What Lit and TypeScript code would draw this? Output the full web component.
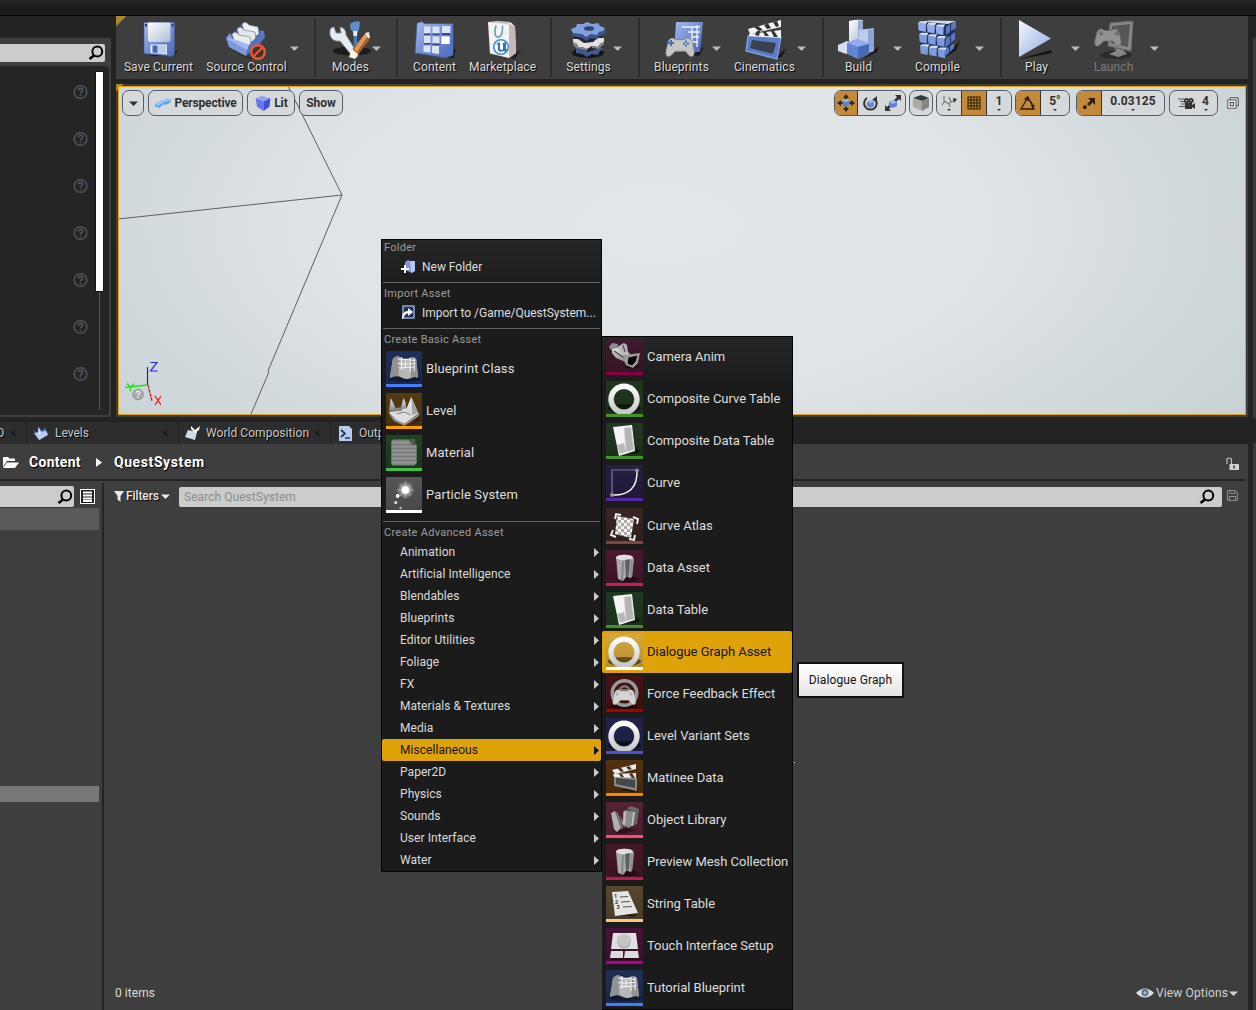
import { LitElement, html, svg, css, nothing } from "lit";
import { customElement, state } from "lit/decorators.js";

type Tool = { id: string; label: string; gap: number; width: number; arrowGap?: number; off?: boolean };
type Asset = { label: string; icon: string; bg: string; bar: string };

const toolGroups: Tool[][] = [
  [
    { id: "save", label: "Save Current", gap: 0, width: 84 },
    { id: "source", label: "Source Control", gap: 6, width: 80, arrowGap: 3 },
  ],
  [{ id: "modes", label: "Modes", gap: 12, width: 44, arrowGap: -1 }],
  [
    { id: "content", label: "Content", gap: 10, width: 52 },
    { id: "market", label: "Marketplace", gap: 8, width: 68 },
  ],
  [{ id: "settings", label: "Settings", gap: 12, width: 48, arrowGap: 0 }],
  [
    { id: "blueprints", label: "Blueprints", gap: 12, width: 58, arrowGap: 1 },
    { id: "cinematics", label: "Cinematics", gap: 11, width: 64, arrowGap: 0 },
  ],
  [
    { id: "build", label: "Build", gap: 18, width: 32, arrowGap: 18 },
    { id: "compile", label: "Compile", gap: 12, width: 46, arrowGap: 14 },
  ],
  [
    { id: "play", label: "Play", gap: 20, width: 28, arrowGap: 20 },
    { id: "launch", label: "Launch", gap: 12, width: 42, arrowGap: 15, off: true },
  ],
];
const groupTail = [15, 15, 14, 16, 16, 16, 0];

const basicAssets: Asset[] = [
  { label: "Blueprint Class", icon: "map", bg: "#1f2f55", bar: "#3f7fff" },
  { label: "Level", icon: "level", bg: "#543a14", bar: "#ff9c00" },
  { label: "Material", icon: "material", bg: "#1f4222", bar: "#40c040" },
  { label: "Particle System", icon: "particle", bg: "#565656", bar: "#ffffff" },
];

const advanced = [
  "Animation", "Artificial Intelligence", "Blendables", "Blueprints", "Editor Utilities",
  "Foliage", "FX", "Materials & Textures", "Media", "Miscellaneous", "Paper2D",
  "Physics", "Sounds", "User Interface", "Water",
];

const miscAssets: Asset[] = [
  { label: "Camera Anim", icon: "camera", bg: "#40192d", bar: "#8a0045" },
  { label: "Composite Curve Table", icon: "ring", bg: "#20381f", bar: "#45922a" },
  { label: "Composite Data Table", icon: "table", bg: "#20381f", bar: "#45922a" },
  { label: "Curve", icon: "curve", bg: "#271e43", bar: "#5528a8" },
  { label: "Curve Atlas", icon: "atlas", bg: "#382524", bar: "#7f4442" },
  { label: "Data Asset", icon: "column", bg: "#48192f", bar: "#c81e5a" },
  { label: "Data Table", icon: "table", bg: "#20381f", bar: "#45922a" },
  { label: "Dialogue Graph Asset", icon: "ring", bg: "#d8a93c", bar: "#ffffff" },
  { label: "Force Feedback Effect", icon: "wheel", bg: "#461314", bar: "#a80000" },
  { label: "Level Variant Sets", icon: "ring", bg: "#23234a", bar: "#4e51c8" },
  { label: "Matinee Data", icon: "clapper", bg: "#52310f", bar: "#ff8000" },
  { label: "Object Library", icon: "books", bg: "#542233", bar: "#ff4a73" },
  { label: "Preview Mesh Collection", icon: "column", bg: "#461829", bar: "#c41850" },
  { label: "String Table", icon: "list", bg: "#57462f", bar: "#ffc680" },
  { label: "Touch Interface Setup", icon: "touch", bg: "#451337", bar: "#b2008e" },
  { label: "Tutorial Blueprint", icon: "map", bg: "#1f2f55", bar: "#3f7fff" },
];

const defs = html`<svg class="defs" width="0" height="0">
  <defs>
    <linearGradient id="blue" x1="0" y1="0" x2="1" y2="1"><stop offset="0" stop-color="#a3b8ee" /><stop offset="1" stop-color="#4a67b8" /></linearGradient>
    <linearGradient id="pale" x1="0" y1="0" x2="1" y2="1"><stop offset="0" stop-color="#ffffff" /><stop offset="1" stop-color="#aebbd9" /></linearGradient>
    <linearGradient id="play" x1="0" y1="0" x2="1" y2="1"><stop offset="0" stop-color="#f6f8ff" /><stop offset="1" stop-color="#8ea9df" /></linearGradient>
    <linearGradient id="gray" x1="0" y1="0" x2="0" y2="1"><stop offset="0" stop-color="#e6e6e6" /><stop offset="1" stop-color="#858585" /></linearGradient>
    <linearGradient id="white" x1="0" y1="0" x2="0" y2="1"><stop offset="0" stop-color="#ffffff" /><stop offset="1" stop-color="#c9c9cb" /></linearGradient>
    <radialGradient id="glow"><stop offset="0" stop-color="#fff" /><stop offset=".35" stop-color="#fff" stop-opacity=".6" /><stop offset="1" stop-color="#fff" stop-opacity="0" /></radialGradient>
    <linearGradient id="shade" x1="0" y1="0" x2="0" y2="1"><stop offset="0" stop-color="#000" stop-opacity="0" /><stop offset="1" stop-color="#000" stop-opacity=".18" /></linearGradient>
    <pattern id="check" width="6" height="6" patternUnits="userSpaceOnUse"><rect width="6" height="6" fill="#f4f4f4" /><rect width="3" height="3" fill="#aaa" /><rect x="3" y="3" width="3" height="3" fill="#aaa" /></pattern>
    <pattern id="dots" x="7" y="4" width="4" height="4" patternUnits="userSpaceOnUse"><rect width="4" height="4" fill="#8a8a8a" /><rect x="1" y="1.4" width="2.4" height="1.2" fill="#5d5d5d" /><rect x="1.6" y="2.6" width="1.8" height="1" fill="#bcbcbc" /></pattern>
  </defs>
</svg>`;

const pad = svg`<path d="M2 9Q3 1 8 2L10 3.4H18L20 2Q25 1 26 9Q28.500 17 25.500 19Q22.500 20 19 14H9.500Q5 20 2 19Q-.5 17 2 9Z"/>`;

/* Toolbar artwork on a 48 x 44 canvas. */
const toolArt: Record<string, unknown> = {
  save: svg`<path d="M14 38L40 34L44 32L40 38Z" fill="#181818"/><path d="M10 4.500H40.500V36.500L38 38.500L10 35.500Z" fill="url(#blue)" stroke="#3f5593" stroke-width=".6"/><path d="M14 4.500H36.500V22.500Q36 24 34 24H16Q14 24 14 22Z" fill="url(#pale)"/><path d="M16.500 26.500H33V36.500L16.500 35Z" fill="#e6ebf7"/><path d="M18.500 27.500H23.500V35L18.500 34.500Z" fill="#4667ae"/><path d="M24 27.500H32V35.500L24 35Z" fill="#c0cbe6"/><path d="M11 6H13V8.500H11ZM37.500 6H39.500V8.500H37.500Z" fill="#27396e"/>`,
  source: svg`<path d="M12 34L28 40L40 31V37L28 41Z" fill="#222"/><path d="M36 12L42 13L43 20L38 24Z" fill="#5d78c2"/><path d="M9 17L20 5L38 12L38 24L22 32Z" fill="#3f5596"/><path d="M20 6Q23 3 25 5L27 7L36 9L37 16L34 18L22 13Z" fill="#eef1f3" stroke="#76828e" stroke-width=".7"/><path d="M15 11Q18 8 20 10L22 12L33 14L34 21L30 24L17 18Z" fill="#e3e8ea" stroke="#76828e" stroke-width=".7"/><path d="M10 16Q13 13 15 15L17 17L28 19L29 26L26 29L12 23Z" fill="#e9edee" stroke="#76828e" stroke-width=".7"/><path d="M4 20L8 15L11 21L27 27L24 38L7 29Z" fill="#7d98dd"/><path d="M4 20L11 21L27 27L25 32Z" fill="#a5b9ef"/><path d="M27 27L38 15L42 20L38 26L24 38Z" fill="#5572bd"/><circle cx="36" cy="34" r="6.800" fill="#46302a" stroke="#df5c3a" stroke-width="2.400"/><path d="M31.500 38.500L40.500 29.500" stroke="#df5c3a" stroke-width="2.400"/>`,
  modes: svg`<ellipse cx="26" cy="33" rx="19" ry="4.500" fill="#1b1b1b"/><path d="M25 5Q31 2 34 4L33 12L31 14H27Q22 9 25 5Z" fill="#5b8fcd"/><path d="M27 13H31.500L31 18H27.500Z" fill="#e4edf6"/><path d="M27.500 18H31L32 35H28Z" fill="#4a7db4"/><path d="M4 12Q5 9 8 9L10 15L15 15L14 9Q20 10 20 17L32 36Q32 41 27 39L14 23Q6 24 4 17Z" fill="#e7ecf1" stroke="#7c8a99" stroke-width=".9"/><path d="M42 14L44 21L32 37L26 35L27 30L38 17Z" fill="#9d5f2d"/><path d="M41 15L42 18L31 34L28 31L38 17Z" fill="#dc9a60"/><path d="M26 31L32 36L29 41L23 39Z" fill="#fff4e2"/><path d="M39 15L43 14L44 20L42 20Z" fill="#e9e4df"/>`,
  content: svg`<path d="M34 40L46 30L44 40Z" fill="#1f1f1f"/><path d="M7 5L12 3.500L14 5.500H43V37L36 40L5 35Z" fill="url(#blue)" stroke="#3f5593" stroke-width=".7"/><path d="M37 7H43V37L37 39Z" fill="#5676c6" opacity=".7"/><path d="M14 8.500H20.500V15.500H14ZM22.500 8.500H29.500V15.500H22.500ZM32 8H40.500V15H32ZM14 18H20.500V25H14ZM22.500 18.500H29.500V25.500H22.500ZM31.500 18.500H39.500V26H31.500ZM13.500 27.500H20.500V34.500L13.500 34ZM22 28H29V36L22 35Z" fill="#dbe3f8"/><path d="M14 15.500H20.500V17H14ZM22.500 15.500H29.500V17H22.500ZM32 15H40V17H32ZM14 25H20.500V26.500H14ZM22.500 25.500H29.500V27H22.500Z" fill="#334a86"/><path d="M31.500 18.500H39.500V26H31.500Z" fill="#fff"/>`,
  market: svg`<path d="M30 40L44 31L37 41Z" fill="#252525"/><path d="M10 4L33 4.500L37 8.500L38 35L31 40L12 35.500Z" fill="#f5f3f2"/><path d="M31 6L37 8L38 35L31 40Z" fill="#c4b8b9"/><path d="M10 4L19 3L33 4L31 6.500Z" fill="#cfcaca"/><path d="M18 7.500Q15 20 21 19Q25 17 24.500 7.500" fill="none" stroke="#5a9ec4" stroke-width="1.600"/><circle cx="23" cy="29" r="7.300" fill="#fff" stroke="#3f8fca" stroke-width="1.600"/><path d="M18 26L22 24V31Q23.500 33 25 31V26L24 25.500L28 24V31L30 32Q27 34.500 25 33Q21 35 20 32V27Z" fill="#3175b5"/>`,
  settings: svg`<ellipse cx="24" cy="35" rx="16" ry="5" fill="#151515"/><path d="M12 29L18 31H28L36 28L39 31L36 33L34 37L28 36L23 39L18 36L12 35Z" fill="#41578f"/><path d="M10 17L38 17L39 29L24 34L11 29Z" fill="#222631"/><path d="M9 21L14 21L20 25L29 24L34 20L40 20V24L36 26L34 29L28 28L23 31L18 29L14 29L13 26L9 25Z" fill="#e1e1e1"/><path d="M9 24L13 26L14 29L18 29L23 31V33L17 31L12 30L9 27ZM28 28L34 29L36 26L40 24V26L35 31L28 30Z" fill="#858585"/><path d="M7 12L41 11V16L36 18L33 21L27 20L22 23L18 20L9 18Z" fill="#3d5389"/><path d="M7 11L12 9L13 6L19 6L23 4L28 6L34 5L36 8L41 10L39 13L35 14L33 17L27 16L22 19L18 16L9 15Z" fill="#829fdf"/><ellipse cx="25" cy="10.500" rx="5" ry="2.300" fill="#30446f"/>`,
  blueprints: svg`<path d="M34 37L47 29L42 38Z" fill="#1a1a1a"/><path d="M19 4H46L43 34H17Z" fill="url(#blue)"/><path d="M25 9H43M31 14H43M35 19H42M34 24H41M35 9V28M40 7V29" stroke="#eef3ff" stroke-width="1.300" fill="none"/><g transform="translate(8 18) scale(1.08)" fill="#c6c6c4" stroke="#777" stroke-width=".6">${pad}</g><path d="M14 22V28M11 25H17" stroke="#476fc0" stroke-width="2"/><path d="M29 22.500V24.500M29 26.500V28.500M26 25.500H28M30 25.500H32" stroke="#476fc0" stroke-width="2"/>`,
  cinematics: svg`<path d="M36 40L46 30L42 39Z" fill="#161616"/><path d="M8 18L41 19L37 41L6 33Z" fill="#5b7cc7" stroke="#8ba5e2" stroke-width="1.200"/><path d="M12 22L36 25L33 36L10 30Z" fill="#3a4050"/><path d="M8 11L41 2V9L10 16ZM9 16L41 12V20L9 18Z" fill="#f3f3f3"/><path d="M14 9L19 13L23 12L18 8ZM24 7L27 11L31 10L28 5.500ZM33 4L36 9L39 8L37 3ZM15 17L17 13H20L19 18ZM25 18L23 14H26L29 18ZM34 19L31 13H34L38 19Z" fill="#333"/>`,
  build: svg`<path d="M29 41L45 28L43 34Z" fill="#181818"/><path d="M15 3Q22 1 29 2V24H15Z" fill="url(#pale)"/><path d="M24 3L29 2V20H24Z" fill="#9babcf"/><path d="M25 12L40 10V33L28 37L25 30Z" fill="#becced"/><path d="M34 12L40 10V33L34 35Z" fill="#8ea4d6"/><path d="M4 27L13 23L20 26V33L12 36L4 33Z" fill="#d5def4"/><path d="M13 25L23 21L35 26V36L24 41L13 36Z" fill="#6484d2"/><path d="M13 25L23 21L35 26L24 29Z" fill="#91aaea"/><path d="M24 29L35 26V36L24 41Z" fill="#4968b5"/>`,
  compile: svg`<path d="M31 40L47 23L43 32Z" fill="#161616"/><path d="M6 4L42 5L40 30L28 38L8 29Z" fill="#223259"/>${[0, 1, 2].map((r) => [0, 1, 2].map((c) => svg`<path d="M${5 + c * 8.800 + r} ${5 + r * 11.500 + c * 1.600}l8 1l-.3 8l-7 -1.500Z" fill=${r === 0 ? "#94adea" : "#7e9bdd"}/><path d="M${5 + c * 8.800 + r} ${5 + r * 11.500 + c * 1.600}l2 -1.800h7.500l-1.500 2.800Z" fill="#d3ddf8"/>`))}<path d="M8 3.500L17 2.500L43 3L35 6Z" fill="#cddcf0"/><path d="M33 9L37 6V14L33 17ZM38 6L43 3V10L38 13ZM33 20L37 18V26L32 29ZM38 17L42 14V21L38 25ZM32 32L36 29V35L31 39ZM37 28L41 25V30L37 34Z" fill="#5b78c2"/>`,
  play: svg`<path d="M7 41L39 32L40 35L14 40Z" fill="#151515"/><path d="M7 2L39 20.500L7 39Z" fill="url(#play)"/>`,
  launch: svg`<ellipse cx="27" cy="37" rx="16" ry="4" fill="#2b2b2b"/><path d="M21 5L44 3L42 33L19 28Z" fill="#888" stroke="#6a6a6a"/><path d="M23 8L41 6L39 29L22 25Z" fill="#565656"/><path d="M26 30L34 32L38 36L29 39L20 36L27 33Z" fill="#868686"/><g transform="translate(5 9)" fill="#929292" stroke="#646464" stroke-width=".7">${pad}</g><path d="M12 13V18M9.500 15.500H14.500M28 13V18M25.500 15.500H30.500" stroke="#6a6a6a" stroke-width="1.500"/>`,
};

const tileArt: Record<string, unknown> = {
  map: svg`<ellipse cx="19" cy="27.500" rx="17" ry="3.500" fill="#0c1428" opacity=".65"/><path d="M7 8Q11 4 14 6Q19 9 24 7Q28 5 31 8L33 27Q30 25 26 27Q21 29 17 27Q10 23 4 27Z" fill="#b7b7b7"/><path d="M7 8Q11 4 14 6L13 25Q8 25 4 27ZM24 7Q28 5 31 8L33 27Q30 25 26 27Z" fill="#929292"/><path d="M12 8L30 9.500M12 12.500L20 13L30 12.500M13 17L30 16M16 6V19M20 8V18M25 7V21M29 7V20" stroke="#f3f3f3" fill="none" stroke-width="1.100"/>`,
  level: svg`<path d="M6 30L24 33L35 22V27L25 33Z" fill="#241804" opacity=".7"/><path d="M3 19L20 15L34 20L19 31L9 27Z" fill="#dedede"/><path d="M2 19L11 27L19 31L34 20V23L19 33L8 28Z" fill="#8c8c8c"/><path d="M3 18L5 5L9 13L10 17ZM15 15L18 5L20 9L21 16Z" fill="url(#gray)"/><path d="M20 18L26 4L33 20L27 22Z" fill="url(#white)"/><path d="M26 4L33 20L27 22Z" fill="#a5a5a5"/><path d="M4 19L9 15L18 14L16 18Z" fill="#858585"/><path d="M11 21L19 19L25 22" stroke="#777" fill="none"/>`,
  material: svg`<path d="M7 5H24L31 10V28Q30 30 28 30H7Q6 30 6 28V6Z" fill="url(#dots)" stroke="#898989"/><path d="M23 4H30V11L26 9Z" fill="#4d5b4d"/>`,
  particle: svg`<circle cx="20" cy="13" r="9" fill="url(#glow)"/><path d="M20 4V22M11 13H29M14 7L26 19M14 19L26 7" stroke="#fff" stroke-width=".6" opacity=".5"/><circle cx="20" cy="13" r="3.800" fill="#fff"/><circle cx="12" cy="19" r="1.900" fill="#fff"/><circle cx="10" cy="25.500" r="1.600" fill="#ddd"/><circle cx="15" cy="31" r="1.200" fill="#bbb"/>`,
  camera: svg`<path d="M18 28L30 25L34 28L26 30Z" fill="#16060e" opacity=".7"/><path d="M3 8L6 4L12 5L11 10L5 11Z" fill="#8c8c8c"/><path d="M6 10L17 8L24 15L22 24L10 19L6 14Z" fill="url(#gray)"/><path d="M11 8L18 4L21 6L22 13L16 14Z" fill="#b5b5b5"/><path d="M17 6L19 13M8 12L20 20" stroke="#4a4a4a" stroke-width="1.200"/><path d="M18 16L34 14L32 24L27 29L20 26L17 20Z" fill="#999"/><path d="M22 18L32 16L30 23L26 27L21 25Z" fill="#080808" stroke="#bdbdbd" stroke-width=".8"/>`,
  ring: svg`<ellipse cx="18.500" cy="27.500" rx="16.500" ry="4.500" fill="#000" opacity=".48"/><circle cx="18" cy="18.300" r="13" fill="none" stroke="url(#white)" stroke-width="5.400"/><circle cx="18" cy="18.300" r="10.300" fill="none" stroke="#8d8d8d" stroke-opacity=".4" stroke-width=".7"/>`,
  table: svg`<ellipse cx="25" cy="28" rx="9" ry="3" fill="#000" opacity=".5"/><path d="M7 4L26 2L29 28L13 33Z" fill="#f5f5f5"/><path d="M18 5L25 4L28 27L20 29Z" fill="#b4b4b4" stroke="#ddd" stroke-width=".7"/><path d="M11 22L18 20L20 29L14 31Z" fill="#b9b9b9"/>`,
  curve: svg`<path d="M6 30V5H31" fill="none" stroke="#807994" stroke-width="1.200"/><path d="M6 30Q32 31 31 5" fill="none" stroke="#f4f3f6" stroke-width="1.500"/><circle cx="31" cy="5.500" r="2" fill="#969494"/><circle cx="6" cy="30" r="2" fill="#969494"/>`,
  atlas: svg`<path d="M11 8L28 11L25 30L9 26Z" fill="url(#check)"/><path d="M9 11L10 6L15 7M27 9L32 11L31 16M7 22L5 27L10 29M23 31L28 32L29 27" fill="none" stroke="#f1f1f1" stroke-width="1.900"/>`,
  column: svg`<ellipse cx="21" cy="29" rx="11" ry="3" fill="#000" opacity=".4"/><path d="M10 7Q15 3 26 6L28 9L26 27L24 28L21 26L17 31L12 29Z" fill="#aaa"/><ellipse cx="18.500" cy="7.500" rx="8.500" ry="2.800" fill="#dedede"/><path d="M19 10L24 9L23 25L20 27Z" fill="#606060"/><path d="M25 9L27 9L26 27L24 27Z" fill="#8d8d8d"/><path d="M16 11H18L17 31L15 30Z" fill="#858585"/>`,
  wheel: svg`<ellipse cx="18" cy="30" rx="13" ry="3" fill="#000" opacity=".5"/><circle cx="18.500" cy="17" r="12.300" fill="none" stroke="#999" stroke-width="3.400"/><path d="M12 16Q13 9 18.500 9Q24 9 25 16" fill="#777"/><path d="M15 13Q18.500 10 22 13Z" fill="#2a1010"/><g transform="translate(6 12) scale(.88)" fill="#d4d4d4" stroke="#888" stroke-width=".5">${pad}</g><path d="M11 16V20M9 18H13M25 16V20M23 18H27" stroke="#aaa" stroke-width="1"/>`,
  clapper: svg`<path d="M12 30L32 27V31L26 32Z" fill="#1b1005" opacity=".65"/><path d="M8 16L31 18V31L8 26Z" fill="#888"/><path d="M10 18L29 20V28L10 24Z" fill="#484848"/><path d="M6 10L30 4V9L9 14ZM7 14L30 13V18L8 17Z" fill="#ededed"/><path d="M11 8L15 12L18 11L15 8ZM20 7L23 10L26 9L23 6ZM13 14L15 17H18L16 14ZM23 14L26 18H29L26 13Z" fill="#483720"/>`,
  books: svg`<path d="M8 30L20 26L31 28L16 32Z" fill="#1a070d" opacity=".6"/><path d="M5 11L9 9L15 26L11 30L8 27Z" fill="#b0b0b0"/><path d="M9 9L12 11L17 26L15 27Z" fill="#777"/><path d="M14 13L18 22L19 26L16 22Z" fill="#999"/><path d="M21 6L25 4L33 7L31 22L26 24L26 10Z" fill="#666"/><path d="M17 10L20 8L27 10L25 24L23 26L17 23Z" fill="#8c8c8c"/><path d="M18 10L20 9L19 23L17 22ZM27 10L29 10L27 24L25 24Z" fill="#c0c0c0"/>`,
  list: svg`<path d="M12 29L31 27L29 31Z" fill="#161006" opacity=".6"/><path d="M6 6L22 5L32 27L9 30Z" fill="#e5e5e5"/><path d="M14 11L22 10.500M15 16L24 15.500M17 21L26 20.500" stroke="#555" stroke-width="1.100"/><text x="8" y="12" font-size="5.500" font-weight="700" fill="#333">1</text><text x="9" y="17.500" font-size="5.500" font-weight="700" fill="#333">2</text><text x="10.500" y="23" font-size="5.500" font-weight="700" fill="#333">3</text>`,
  touch: svg`<path d="M6 30H33L35 32H4Z" fill="#15030f" opacity=".6"/><path d="M7 5H30L32 21H5Z" fill="#e0e0e0"/><circle cx="18" cy="13.500" r="7" fill="#777" opacity=".5"/><circle cx="18" cy="12.500" r="6.500" fill="#c5c5c5"/><path d="M5 23H17V30H4ZM19 23H32L33 30H18Z" fill="#dadada"/>`,
};

const search = html`<svg class="search" viewBox="0 0 16 16" width="16" height="16"><circle cx="9.300" cy="6.500" r="4.900" fill="none" stroke="#000" stroke-width="2" /><path d="M6 10.500L1.500 14" stroke="#000" stroke-width="2.600" /></svg>`;
const help = html`<svg width="15" height="16" viewBox="0 0 15 16"><circle cx="7.500" cy="8" r="6.300" fill="none" stroke="#4a5561" stroke-width="1.500" /><path d="M5.300 6.300Q5.500 4.300 7.500 4.300Q9.800 4.500 9.600 6.400Q9.400 7.500 8.200 8Q7.500 8.400 7.500 9.600M7.500 10.800V12.200" fill="none" stroke="#4a5561" stroke-width="1.700" /></svg>`;
const caret = html`<svg width="9" height="5" viewBox="0 0 9 5"><path d="M0 .5H9L4.500 5Z" fill="currentColor" /></svg>`;
const dot = html`<svg class="dot" width="4" height="2" viewBox="0 0 4 2"><path d="M0 0H4L2 2Z" fill="#333" /></svg>`;
const cube = svg`<path d="M1 3L7 1L15 3L8.500 6Z" fill="#8fa2f7"/><path d="M1 3L8.500 6V15L2.500 11Z" fill="#6176ef"/><path d="M8.500 6L15 3L14 11L8.500 15Z" fill="#3f50d5"/>`;

@customElement("app-root")
export class AppRoot extends LitElement {
  @state() private category = "Miscellaneous";
  @state() private asset = "Dialogue Graph Asset";

  static styles = css`
    :host { display: block; }
    * { box-sizing: border-box; }
    svg { display: block; flex: none; }
    .defs { height: 0; }
    .app { position: relative; width: 1256px; height: 1010px; overflow: hidden; display: flex; flex-direction: column; background: #232323; font-family: Roboto, "Liberation Sans", sans-serif; font-size: 12px; color: #dcdcdc; white-space: nowrap; }
    .title { height: 16px; flex: none; background: linear-gradient(#272727, #191919 60%, #1c1c1c); border-bottom: 1px solid #000; }
    .upper { display: flex; height: 402px; flex: none; }
    .side { width: 111px; margin-top: 22px; height: 379px; background: #3e3e3e; padding: 6px 2px 3px 0; }
    .field { display: flex; align-items: center; justify-content: flex-end; background: #ccc; height: 18px; width: 105px; border-radius: 0 2px 2px 0; padding-right: 1px; }
    .details { display: flex; height: 349px; margin-top: 4px; background: #252525; border-radius: 0 4px 3px 0; }
    .helps { width: 88px; padding: 18px 0 0 72.500px; display: flex; flex-direction: column; gap: 31px; }
    .scroll { margin: 5px 0 0 7px; width: 9px; height: 339px; background: linear-gradient(#555, #555) center / 1px 100% no-repeat; }
    .thumb { height: 221px; background: #fff; border: 1px solid #171717; }
    .center { width: 1132px; margin-left: 5px; }
    .rail { width: 3px; margin: 22px 0 0 auto; height: 380px; background: #3a3a3a; }
    .tools { display: flex; height: 63px; background: linear-gradient(135deg, #a98a22 7px, #3e3e3e 7.500px); padding-top: 2px; }
    .group { display: flex; align-items: flex-start; }
    .group + .group { border-left: 2px solid #2c2c2c; height: 59px; }
    .tool { display: flex; flex-direction: column; align-items: center; text-shadow: 1px 1px 1px #000; letter-spacing: .1px; }
    .tool span { line-height: 14px; margin-top: -2px; padding-left: 1px; }
    .tool.off span { color: #7b7b7b; text-shadow: none; }
    .arrow { margin-top: 28px; width: 10px; color: #b9b9b9; padding-left: .5px; }
    .frame { margin-top: 5px; height: 333px; padding: 2px; background: linear-gradient(135deg, #a98a22 5px, #3e3e3e 5.500px); }
    .view { position: relative; height: 329px; border: 1.500px solid #e2a213; background: radial-gradient(ellipse 64% 110% at 48% 42%, #e1e6e9 0%, #dfe4e7 45%, #c6d0d3 100%); }
    .wires { position: absolute; left: 0; top: 0; }
    .vbar { display: flex; align-items: center; height: 26px; margin: 3px 6px 0 3px; gap: 4px; position: relative; color: #303030; font-weight: 700; }
    .pill { height: 26px; border: 1px solid #555a5c; border-radius: 7px; background: #d5d9db; display: flex; align-items: center; justify-content: center; overflow: hidden; box-shadow: inset 0 0 0 1px #ffffff22; }
    .cell { height: 26px; display: flex; align-items: center; justify-content: center; flex-direction: column; }
    .cell.num { padding-bottom: 1px; gap: 1px; line-height: 13px; flex: 1; }
    .on { background: #c38a3b; border-right: 1px solid #333; }
    .push { margin-left: auto; }
    .tabs { display: flex; height: 22px; margin-top: 4px; flex: none; gap: 1px; }
    .tab { display: flex; align-items: center; background: #2d2d2d; border-radius: 3px 3px 0 0; color: #c8c8c8; text-shadow: 1px 1px 0 #000; overflow: hidden; }
    .tab .x { margin-left: auto; padding-right: 9px; color: #151515; font-size: 10px; text-shadow: none; }
    .browser { display: flex; flex: 1; min-height: 0; }
    .main { width: 1248px; background: #3e3e3e; display: flex; flex-direction: column; }
    .crumbs { display: flex; align-items: center; height: 37px; margin-right: 2px; border-bottom: 2px solid #242424; font-size: 14px; font-weight: 700; letter-spacing: .3px; color: #fff; text-shadow: 1px 1px 1px #000; padding-left: 2px; }
    .body { display: flex; flex: 1; }
    .tree { width: 104px; border-right: 2px solid #242424; margin-top: 2px; padding-top: 3px; }
    .treehead { display: flex; align-items: center; gap: 6px; height: 21px; }
    .treehead .field { width: 74px; height: 21px; }
    .row1 { height: 22px; width: 99px; background: #595959; margin-top: 1px; }
    .row2 { height: 16px; width: 99px; background: #777; margin-top: 256px; }
    .files { flex: 1; display: flex; flex-direction: column; }
    .filterbar { display: flex; align-items: center; height: 20px; margin-top: 6px; padding-left: 10px; color: #e9e9e9; }
    .filters { width: 65px; display: flex; align-items: center; gap: 2px; font-weight: 500; letter-spacing: -.1px; text-shadow: 1px 1px 1px #000; padding-bottom: 2px; }
    .find { width: 1043px; height: 20px; border-radius: 2px; background: #ccc; color: #8b8b8b; display: flex; align-items: center; justify-content: space-between; padding: 0 7px 0 5px; letter-spacing: .05px; }
    .status { margin-top: auto; display: flex; justify-content: space-between; height: 34px; align-items: center; padding: 0 10px 0 11px; letter-spacing: .05px; }
    .options { display: flex; align-items: center; gap: 1px; color: #d2d2d2; letter-spacing: .13px; }
    .menu, .sub { position: absolute; background: linear-gradient(#262626, #1b1b1b 50px); border: 1px solid #050505; }
    .menu { left: 381px; top: 239px; width: 221px; height: 633px; }
    .sub { left: 602px; top: 336px; width: 191px; height: 674px; border-width: 0 1px 1px 0; box-shadow: inset 0 1px #050505; }
    .head { color: #9b9b9b; font-size: 11px; height: 14px; line-height: 16px; padding-left: 2px; letter-spacing: .28px; }
    .act { display: flex; align-items: center; height: 24px; padding: 1px 0 0 17px; color: #dedede; letter-spacing: -.02px; }
    .act svg { margin-right: 6px; }
    .line { height: 1px; background: #626262; margin: 3px 1px; }
    .asset { display: flex; align-items: center; height: 42px; gap: 4px; padding: 0 4px; font-size: 13px; color: #dedede; letter-spacing: -.03px; }
    .asset span { padding-bottom: 2px; }
    .menu .asset { letter-spacing: .1px; }
    .sub .asset:nth-child(5) { margin-top: 1px; }
    .hot { background: #dea309; color: #141414; border-radius: 2px; }
    .cat { display: flex; align-items: center; justify-content: space-between; height: 22px; padding: 0 2px 0 18px; letter-spacing: .06px; }
    .tip { position: absolute; left: 797px; top: 662px; width: 107px; height: 36px; border: 2px solid #111; background: linear-gradient(#fff, #e6e6e6); color: #111; display: flex; align-items: center; justify-content: center; letter-spacing: .12px; }
    .speck { position: absolute; left: 794px; top: 762px; width: 1px; height: 1px; background: #ddd; }
    .axis { position: absolute; left: 6px; top: 273px; }
  `;

  private tool(t: Tool) {
    return html`<div class="tool ${t.off ? "off" : ""}" style="width:${t.width}px;margin-left:${t.gap}px">
        <svg width="48" height="44" viewBox="0 0 48 44">${toolArt[t.id]}</svg><span>${t.label}</span>
      </div>
      ${t.arrowGap === undefined ? nothing : html`<div class="arrow" style="margin-left:${t.arrowGap}px">${caret}</div>`}`;
  }

  private row(a: Asset, w: number) {
    return html`<div class="asset ${a.label === this.asset ? "hot" : ""}" @mouseenter=${() => (this.asset = a.label)}>
      <svg width=${w} height="36" viewBox="0 0 37 36" preserveAspectRatio="none">
        <rect width="37" height="36" fill=${a.bg} /><rect width="37" height="36" fill="url(#shade)" />
        ${tileArt[a.icon]}<rect y="33" width="37" height="3" fill=${a.bar} />
      </svg><span>${a.label}</span>
    </div>`;
  }

  private viewport() {
    return html`<div class="view">
      <svg class="wires" width="240" height="327" viewBox="119 87 240 327"><path d="M288 86L342 195L118 219M342 195L268 371L269 372L251 414" fill="none" stroke="#4d5152" stroke-width=".9" /></svg>
      <div class="vbar">
        <div class="pill" style="width:22px">${caret}</div>
        <div class="pill" style="width:95px;letter-spacing:-.15px"><svg width="17" height="14" viewBox="0 0 17 14"><path d="M1 8L8 4L10 5L14 2L17 4L16 7L11 9L10 8L5 12L1 10Z" fill="#5c9dee" /><path d="M1 8L8 4L11 6L4 10ZM10 5L14 2L17 4L13 6Z" fill="#94c6fb" /></svg><span style="margin-left:3px">Perspective</span></div>
        <div class="pill" style="width:48px"><svg width="18" height="17" viewBox="0 0 16 16">${cube}</svg><span style="margin-left:2px">Lit</span></div>
        <div class="pill" style="width:44px">Show</div>
        <div class="pill push" style="width:72px">
          <div class="cell on" style="width:24px"><svg width="18" height="18" viewBox="0 0 18 18"><path d="M9 0L12 4H10V7H8V4H6ZM9 18L6 14H8V11H10V14H12ZM0 9L4 6V8H7V10H4V12ZM18 9L14 12V10H11V8H14V6Z" fill="#2c2820" /><path d="M5.500 6.500L9 5L12.500 6.500V11L9 13L5.500 11Z" fill="#6482c6" /><path d="M5.500 6.500L9 5L12.500 6.500L9 8Z" fill="#a6bbe9" /></svg></div>
          <div class="cell" style="width:24px"><svg width="17" height="17" viewBox="0 0 17 17"><path d="M5 3A6.300 6.300 0 1 0 13 4" fill="none" stroke="#333" stroke-width="2" /><path d="M10 5L15 1V7Z" fill="#333" /><path d="M5 6.500L8.500 5L12 6.500V11L8.500 13L5 11Z" fill="#6685da" /><path d="M5 6.500L8.500 5L12 6.500L8.500 8Z" fill="#a9bcf4" /></svg></div>
          <div class="cell" style="width:24px"><svg width="18" height="18" viewBox="0 0 18 18"><path d="M11 1H17V7L15 5L12 8L10 6L13 3ZM7 17H1V11L3 13L5 11L7 13L5 15Z" fill="#333" /><path d="M5 8L9 6L13 8V12L9 14L5 12Z" fill="#5f80d6" /><path d="M5 8L9 6L13 8L9 10Z" fill="#9fb6f0" /></svg></div>
        </div>
        <div class="pill" style="width:24px;margin-left:-1px"><svg width="18" height="18" viewBox="0 0 18 18"><path d="M1 4L9 1L17 4L10 7Z" fill="#30393b" /><path d="M1 4L10 7V17L1 13Z" fill="#aaa" /><path d="M10 7L17 4V13L10 17Z" fill="#858585" /></svg></div>
        <div class="pill" style="width:76px;margin-left:-1px">
          <div class="cell num" style="width:24px"><svg width="17" height="13" viewBox="0 0 17 13"><path d="M3 1V6L8 9L9 12M4 6L1 10M8 8L15 5M8 2L10 7" stroke="#777" fill="none" stroke-width="1.200" /><path d="M12 3L16 4L13 8Z" fill="#333" /></svg>${dot}</div>
          <div class="cell on" style="width:26px;border-left:1px solid #333"><svg width="14" height="14" viewBox="0 0 14 14"><path d="M.7 1H13.300M.7 4H13.300M.7 7H13.300M.7 10H13.300M.7 13H13.300M1 .7V13.300M4 .7V13.300M7 .7V13.300M10 .7V13.300M13 .7V13.300" stroke="#2b2008" stroke-width="1.100" /></svg></div>
          <div class="cell num">1${dot}</div>
        </div>
        <div class="pill" style="width:55px;margin-left:-1px"><div class="cell on" style="width:25px"><svg width="16" height="16" viewBox="0 0 16 16"><path d="M1 14H14L8 2ZM5 4Q12 4 13 13" fill="none" stroke="#2c2007" stroke-width="1.300" /><path d="M4 4L8 1V6ZM11 10H15L13 14Z" fill="#2c2007" /></svg></div><div class="cell num">5°${dot}</div></div>
        <div class="pill" style="width:89px;margin-left:2px"><div class="cell on" style="width:25px"><svg width="14" height="14" viewBox="0 0 14 14"><path d="M6 2H13V9L10.500 6.500L7 10L5 8L8.500 4.500ZM1 10L3.500 9L5 11L4 13H1Z" fill="#2c2007" /></svg></div><div class="cell num" style="letter-spacing:.1px">0.03125${dot}</div></div>
        <div class="pill" style="width:49px"><div class="cell" style="width:24px"><svg width="18" height="13" viewBox="0 0 18 13" style="margin-left:10px"><path d="M0 2H6M2 4.500H7M3 7H7M1 9.500H7" stroke="#555" /><circle cx="8.500" cy="3.500" r="2.600" fill="#333" /><circle cx="13" cy="3.500" r="2.600" fill="#333" /><path d="M7 6H14V12H7ZM14 8L17 6V12L14 10Z" fill="#333" /><circle cx="8.500" cy="3.500" r=".8" fill="#ccc" /><circle cx="13" cy="3.500" r=".8" fill="#ccc" /></svg></div><div class="cell num">4${dot}</div></div>
        <svg style="margin-left:5px;margin-right:0" width="12" height="12" viewBox="0 0 12 12"><path d="M3 3V.7H11.300V9H9" fill="none" stroke="#5b5f61" /><rect x=".7" y="3" width="8.300" height="8.300" fill="#eceeef" stroke="#5b5f61" /><rect x="3.200" y="5.500" width="3.300" height="3.300" fill="none" stroke="#444" /></svg>
      </div>
      <svg class="axis" width="36" height="48" viewBox="125 360 36 48"><path d="M147.500 367V385" stroke="#1414c8" stroke-width="1.100" /><path d="M147.500 385L139 386L124 387.500" stroke="#1de01d" stroke-width="1.300" /><path d="M148 385L152 401" stroke="#e01414" stroke-width="1.300" stroke-dasharray="3.500 .8" /><path d="M150.500 362.500H157L150.500 371H157.500" fill="none" stroke="#2222f0" stroke-width="1.200" /><path d="M127 383.500L130.500 387.500L134 383.500M130.500 387V391.500" fill="none" stroke="#1de01d" stroke-width="1.300" /><path d="M155 396L161 405M161 396L155 405" stroke="#f01a1a" stroke-width="1.300" /><circle cx="138" cy="394.500" r="5.300" fill="#a9acae" stroke="#8e9496" /><path d="M136 393Q136.500 391 138.200 391Q140.200 391.500 139.700 393Q138.200 394.500 138 395.500M138 396.500V398" fill="none" stroke="#eee" stroke-width="1.200" /></svg>
    </div>`;
  }

  render() {
    return html`${defs}
      <div class="app">
        <div class="title"></div>
        <div class="upper">
          <div class="side">
            <div class="field">${search}</div>
            <div class="details">
              <div class="helps">${Array.from({ length: 7 }, () => help)}</div>
              <div class="scroll"><div class="thumb"></div></div>
            </div>
          </div>
          <div class="center">
            <div class="tools">${toolGroups.map((g, i) => html`<div class="group" style="padding-right:${groupTail[i]}px">${g.map((t) => this.tool(t))}</div>`)}</div>
            <div class="frame">${this.viewport()}</div>
          </div>
          <div class="rail"></div>
        </div>
        <div class="tabs">
          <div class="tab" style="width:26px"><span style="margin-left:-4px">O</span><span class="x">✕</span></div>
          <div class="tab" style="width:151px;padding-left:6px"><svg width="16" height="15" viewBox="0 0 16 15"><path d="M0 3L4 7L6 1L9 5L12 2L15 8L7 14Z" fill="#4f78cb" /><path d="M1 7L13 5L15 9L6 14Z" fill="#b9cef4" /><path d="M5 1L8 6L6 9Z" fill="#e6efff" /></svg><span style="margin-left:6px">Levels</span><span class="x">✕</span></div>
          <div class="tab" style="width:151px;padding-left:6px"><svg width="16" height="16" viewBox="0 0 16 16"><path d="M3 5L12 7L10 15L0 12Z" fill="#cfdde4" /><path d="M6 1L10 5L15 1L14 5L10 8L6 4Z" fill="#f5f8fa" /></svg><span style="margin-left:5px;letter-spacing:.05px">World Composition</span><span class="x">✕</span></div>
          <div class="tab" style="width:151px;padding-left:7px"><svg width="15" height="15" viewBox="0 0 15 15"><path d="M1 0H11L14 3V15H1Z" fill="#b9cbed" /><path d="M3 4L7 7.500L3 11M7 12H12" fill="none" stroke="#22345e" stroke-width="1.700" /></svg><span style="margin-left:6px">Output Log</span></div>
        </div>
        <div class="browser">
          <div class="main">
            <div class="crumbs">
              <svg width="17" height="14" viewBox="0 0 17 14"><path d="M1 10V2H6L7.500 3.500H13V6H5L1 12M1 13L5 7.500H17L13 13Z" fill="#fff" /></svg>
              <span style="margin-left:10px">Content</span>
              <svg style="margin:2px 12px 0 15px" width="6" height="9" viewBox="0 0 6 9"><path d="M0 0L6 4.500L0 9Z" fill="#fff" /></svg>
              <span style="letter-spacing:.6px">QuestSystem</span>
              <svg style="margin:3px 7px 0 auto" width="13" height="13" viewBox="0 0 13 13"><path d="M1 7V3Q1 1 3 1Q5.500 1 5.500 3V7" fill="none" stroke="#c4c4c4" stroke-width="1.200" /><rect x="3.500" y="7" width="9.500" height="6" rx=".6" fill="#d0d0d0" /><path d="M8 8.500V11.500" stroke="#444" stroke-width="1.600" /></svg>
            </div>
            <div class="body">
              <div class="tree">
                <div class="treehead"><div class="field">${search}</div><svg width="15" height="15" viewBox="0 0 15 15"><rect x=".5" y=".5" width="14" height="14" fill="#222" stroke="#fff" /><path d="M3 3.500H12M3 6.500H12M3 9.500H12M3 12H12" stroke="#fff" stroke-width="1.800" /></svg></div>
                <div class="row1"></div>
                <div class="row2"></div>
              </div>
              <div class="files">
                <div class="filterbar">
                  <div class="filters"><svg width="10" height="11" viewBox="0 0 10 11"><path d="M0 0H10L6.500 5V11L3.500 8.500V5Z" fill="#e9e9e9" /></svg><span>Filters</span>${caret}</div>
                  <div class="find"><span>Search QuestSystem</span>${search}</div>
                  <svg style="margin:0 0 3px 5px" width="11" height="11" viewBox="0 0 11 11"><path d="M.6 .6H8.500L10.400 2.500V10.400H.6ZM3 .6V3.600H8V.6M2.500 10V6.500H8.500V10" fill="none" stroke="#929292" /></svg>
                </div>
                <div class="status"><span>0 items</span><div class="options"><svg width="18" height="12" viewBox="0 0 18 12"><path d="M0 6Q9 -3 18 6Q9 15 0 6Z" fill="#dedede" /><circle cx="9" cy="5.700" r="3.600" fill="#5f7494" /><circle cx="9" cy="5.700" r="1.500" fill="#a3c0e6" /></svg><span style="margin-left:1px">View Options</span>${caret}</div></div>
              </div>
            </div>
          </div>
          <div class="rail" style="margin-top:-1px;height:567px"></div>
        </div>
        <div class="menu">
          <div class="head">Folder</div>
          <div class="act"><svg width="17" height="15" viewBox="0 0 17 15"><path d="M6 3L9 1L11 2H16V12L13 14L6 11Z" fill="#7e98d9" /><path d="M11 2H16V12L12 14Z" fill="#b8c7ee" /><path d="M6 6V14M2 10H10" stroke="#fff" stroke-width="2" /></svg>New Folder</div>
          <div class="line" style="margin-top:4px"></div>
          <div class="head" style="margin-top:3px">Import Asset</div>
          <div class="act"><svg width="17" height="15" viewBox="0 0 17 15"><path d="M4 1H15V13H4Z" fill="#26324f" stroke="#8fa6da" stroke-width="1.500" /><path d="M3 14Q3 6 9 6V3L14 7L9 11V8.500Q6 8 4 14Z" fill="#fff" /></svg>Import to /Game/QuestSystem...</div>
          <div class="line" style="margin-top:4px"></div>
          <div class="head">Create Basic Asset</div>
          <div style="height:172px;padding-top:2px">${basicAssets.map((a) => this.row(a, 36))}</div>
          <div class="line" style="margin:3px 1px"></div>
          <div class="head" style="margin-bottom:2px">Create Advanced Asset</div>
          ${advanced.map((c) => html`<div class="cat ${c === this.category ? "hot" : ""}" @mouseenter=${() => (this.category = c)}><span>${c}</span><svg width="5" height="9" viewBox="0 0 5 9"><path d="M0 0L5 4.500L0 9Z" fill=${c === this.category ? "#111" : "#c9c9c9"} /></svg></div>`)}
        </div>
        <div class="sub">${miscAssets.map((a) => this.row(a, 37))}</div>
        <div class="tip">Dialogue Graph</div>
        <div class="speck"></div>
      </div>`;
  }
}
